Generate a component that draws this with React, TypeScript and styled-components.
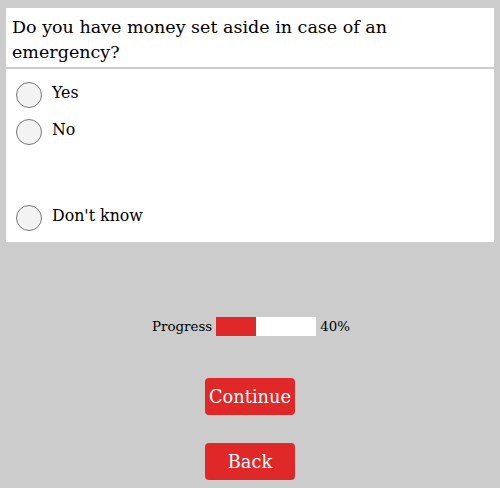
import styled, { createGlobalStyle } from "styled-components";

const GlobalStyle = createGlobalStyle`
  html, body {
    margin: 0;
    padding: 0;
    background-color: #cccccc;
    font-family: "DejaVu Serif", "Liberation Serif", serif;
    color: #000;
  }
`;

const Page = styled.div`
  width: 500px;
  height: 488px;
  padding: 8px 6px 0;
  box-sizing: border-box;
  display: flex;
  flex-direction: column;
`;

const QuestionBox = styled.div`
  background-color: #fff;
  padding: 7px 6px 4px;
  font-size: 17.5px;
  line-height: 25px;
  height: 59px;
  box-sizing: border-box;
  margin-bottom: 2px;
`;

const QuestionText = styled.div`
  width: 400px;
`;

const OptionsBox = styled.div`
  background-color: #fff;
  height: 173px;
  box-sizing: border-box;
  padding: 13px 10px 0;
  display: flex;
  flex-direction: column;
`;

const OptionRow = styled.label<{ gapTop?: number }>`
  display: flex;
  align-items: flex-start;
  gap: 10px;
  height: 26px;
  margin-bottom: 11px;
  margin-top: ${(props) => props.gapTop || 0}px;
  font-size: 15.8px;
  cursor: pointer;
`;

const Radio = styled.span`
  width: 26px;
  height: 26px;
  border-radius: 50%;
  border: 1px solid #767676;
  background-color: #f3f3f3;
  box-sizing: border-box;
  flex-shrink: 0;
`;

const OptionText = styled.span`
  line-height: 22px;
`;

const Footer = styled.div`
  display: flex;
  flex-direction: column;
  align-items: center;
  padding-top: 75px;
`;

const ProgressRow = styled.div`
  display: flex;
  align-items: center;
  gap: 4px;
  font-size: 13.4px;
  margin-left: 2px;
`;

const Track = styled.div`
  width: 100px;
  height: 19px;
  background-color: #fff;
  display: flex;
`;

const Fill = styled.div`
  height: 100%;
  background-color: #e02828;
`;

const Button = styled.button<{ top: number }>`
  width: 90px;
  height: 37px;
  margin-top: ${(props) => props.top}px;
  border: none;
  border-radius: 4px;
  background-color: #e02828;
  color: #fff;
  font-family: "DejaVu Serif", "Liberation Serif", serif;
  font-size: 17.8px;
  padding: 0;
  cursor: pointer;
`;

const options = [
  { label: "Yes", gapTop: 0 },
  { label: "No", gapTop: 0 },
  { label: "Don't know", gapTop: 49 },
];

export default function App() {
  const percent = 40;
  return (
    <Page>
      <GlobalStyle />
      <QuestionBox>
        <QuestionText>Do you have money set aside in case of an emergency?</QuestionText>
      </QuestionBox>
      <OptionsBox>
        {options.map((o) => (
          <OptionRow key={o.label} gapTop={o.gapTop}>
            <Radio />
            <OptionText>{o.label}</OptionText>
          </OptionRow>
        ))}
      </OptionsBox>
      <Footer>
        <ProgressRow>
          Progress
          <Track>
            <Fill style={{ width: `${percent}%` }} />
          </Track>
          {percent}%
        </ProgressRow>
        <Button top={42}>Continue</Button>
        <Button top={28}>Back</Button>
      </Footer>
    </Page>
  );
}
